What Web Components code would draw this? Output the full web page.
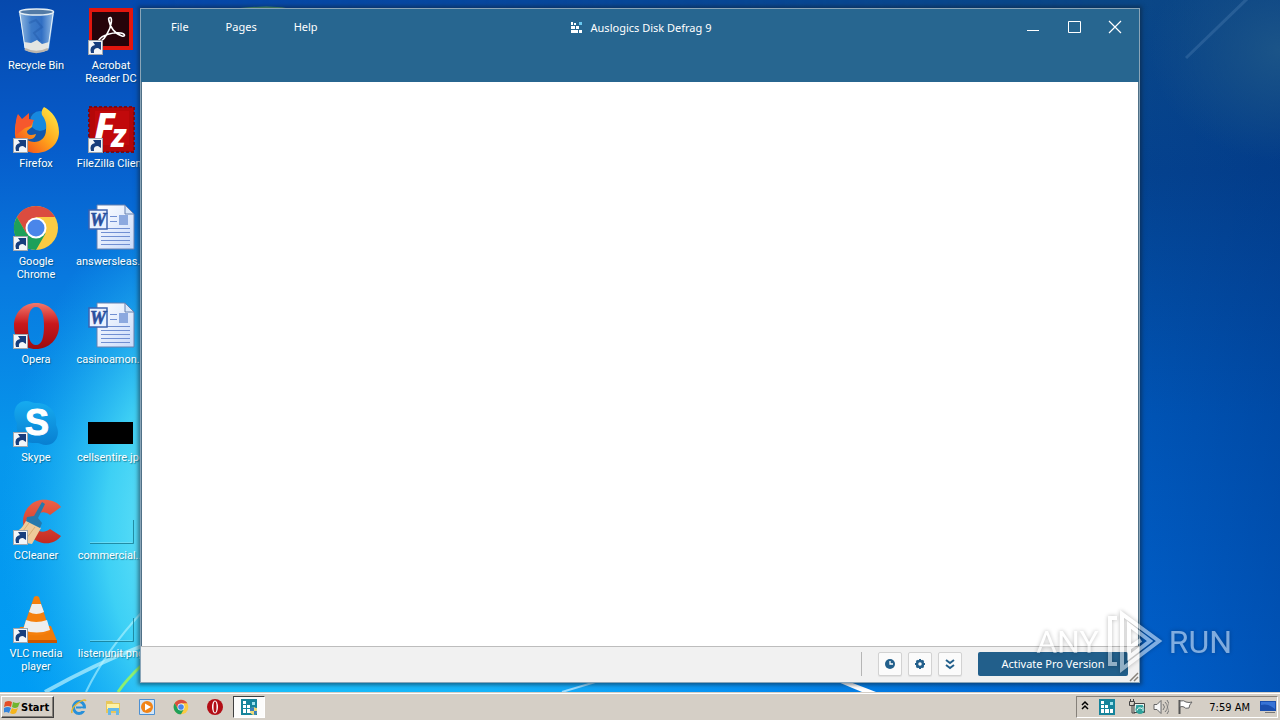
<!DOCTYPE html>
<html lang="en">
<head>
<meta charset="utf-8">
<title>Desktop</title>
<style>
  html, body {
    height: 100%;
    margin: 0;
  }
  body {
    overflow: hidden;
    font: 11px/13px "DejaVu Sans Condensed", "Noto Sans", sans-serif;
  }
</style>
</head>
<body>
<desk-top></desk-top>

<script>
// ================================================
// Constants
// ================================================
const WINDOW_FONT = '11px/16px "Noto Sans", "Open Sans", sans-serif';
const LABEL_FONT = '11px/13px Roboto, "Noto Sans", sans-serif';

const SHORTCUTS = [
  ['recycle', 'Recycle Bin', false],
  ['firefox', 'Firefox', true],
  ['chrome', 'Google Chrome', true],
  ['opera', 'Opera', true],
  ['skype', 'Skype', true],
  ['ccleaner', 'CCleaner', true],
  ['vlc', 'VLC media player', true],
  ['acrobat', 'Acrobat Reader DC', true],
  ['filezilla', 'FileZilla Client', true],
  ['word', 'answersleas...', false],
  ['word', 'casinoamon...', false],
  ['black', 'cellsentire.jpg', false],
  ['blank', 'commercial...', false],
  ['blank', 'listenunit.png', false],
];


// ================================================
// Icons
// ================================================
const CHROME = `
  <circle cx="24" cy="24" r="22" fill="#fbcb43"/>
  <path d="M24 13H43.100A22 22 0 0 0 4.900 13L14.500 29.500Z" fill="#db4c3f"/>
  <path d="M4.900 13A22 22 0 0 0 24 46L33.500 29.500 24 24 14.500 29.500Z" fill="#1ea05a"/>
  <circle cx="24" cy="24" r="10.500" fill="#fff"/>
  <circle cx="24" cy="24" r="8.500" fill="#4a86ea"/>`;

const OPERA = `
  <defs>
    <linearGradient id="op" x1="0" y1="0" x2="0" y2="1">
      <stop offset="0" stop-color="#f2786c"/><stop offset=".45" stop-color="#c9181c"/><stop offset="1" stop-color="#9c0b10"/>
    </linearGradient>
  </defs>
  <path fill="url(#op)" fill-rule="evenodd" d="M24 1C37 1 47 11 47 24S37 47 24 47 2 37 2 24 11 1 24 1ZM24 5C18 5 16 13 16 24S18 43 24 43 32 35 32 24 30 5 24 5Z"/>`;

const DEFRAG = `
  <rect width="16" height="16" fill="#16849b"/>
  <path fill="#fff" d="M2 2h3v3H2zM2 6h3v3H2zM6 6h3v3H6zM2 10h3v4H2zM6 10h4v4H6zM11 10h3v4h-3z"/>
  <path fill="#9fe3ee" d="M11 3h3v3h-3z"/>`;

const ICONS = {
  recycle: `<defs><linearGradient id="g"><stop offset="0" stop-color="#b9d7ee"/><stop offset=".35" stop-color="#4a86cd"/><stop offset=".65" stop-color="#3c78c8"/><stop offset="1" stop-color="#bcdcf4"/></linearGradient></defs>
    <path d="M7 4 13 41Q24 47 37 41L42 4Z" fill="url(#g)" opacity=".8"/>
    <path d="m12 34 1 8q11 5 23 0l1-8-7 2-5-4-6 3z" fill="#e4e5e2"/>
    <path d="m17 15 7-3 6 7-8 6 6 8" fill="none" stroke="#164b9d" stroke-width="2" opacity=".3"/>
    <path d="m8 6 5 34M41 6l-5 34" stroke="#e4f2fb"/>
    <ellipse cx="24.500" cy="4" rx="17" ry="3" fill="#537ba6" stroke="#e4eef4" stroke-width="1.500"/>
    <path d="M13 41q11 6 23 0" fill="none" stroke="#bbb5ad" stroke-width="2.500"/>`,
  firefox: `<defs><linearGradient id="g" x1="1" y1="0" x2="0" y2="1"><stop offset="0" stop-color="#fff44a"/><stop offset=".5" stop-color="#ffa21b"/><stop offset="1" stop-color="#f1381c"/></linearGradient></defs>
    <circle cx="25" cy="22" r="16" fill="#1257ac"/><circle cx="28" cy="15" r="10" fill="#1689df"/>
    <path fill="url(#g)" d="M32 1c8 4 15 13 15 25 0 12-10 21-23 21S2 38 3 25c0-7 2-12 4-15l3 4 6 0 5 1-1 6-5 4c0 4 3 5 9 3-1 5-6 6-10 5 7 6 20 3 20-9 1-7-1-11-4-15-1-3 0-6 2-8Z"/>
    <path fill="#f6582d" d="m6 8 4 5 7-6 0 6 5 1-3 6-6 2-9 7C3 18 4 12 6 8Z"/>`,
  chrome: CHROME,
  opera: OPERA,
  skype: `<defs><linearGradient id="g" x1="0" y1="0" x2="0" y2="1"><stop offset="0" stop-color="#16abf0"/><stop offset="1" stop-color="#087fd1"/></linearGradient></defs>
    <path fill="url(#g)" d="M14 1c4 0 7 2 9 2 14-1 23 10 21 22 5 9 0 20-10 20-4 0-6-2-9-2C11 44 3 35 5 23-1 12 4 1 14 1Z"/>
    <text x="25" y="35" text-anchor="middle" font-family="Liberation Sans, sans-serif" font-size="36" font-weight="700" fill="#fff" stroke="#fff">S</text>`,
  ccleaner: `<defs><linearGradient id="g" x1="0" y1="0" x2="0" y2="1"><stop offset="0" stop-color="#ec6247"/><stop offset="1" stop-color="#c32a21"/></linearGradient></defs>
    <path fill="url(#g)" d="M49 9 38 17c-7-6-16-1-16 7s8 13 16 7l11 7c-6 8-16 9-24 5C4 34 8 7 28 2c8-1 17 1 21 7Z"/>
    <path fill="#eecb9b" d="m15 21 14 9-9 16C12 45 4 41 1 34c8-1 10-6 14-13Z"/>
    <path d="m8 37 9-12M14 41l9-12" stroke="#d9ae74" stroke-width="1"/>
    <path fill="#2579ad" d="m15 19 7-1 8-14 3 2-7 14 4 5-2 5-14-7z"/>`,
  vlc: `<path fill="#f07b09" d="m8 31 31-1 6 15H4z"/><path fill="#c95500" d="m4 44 41 0v3H4z"/>
    <path fill="#f5800d" d="M22 1q2.500-2 5 0l11 35q-14 7-28 0z"/>
    <path fill="#eee" d="m20 8h9l3 8q-8 4-15 0zM14 24q10 4 21 0l3 10q-13 5-27 0z"/>`,
  acrobat: `<rect x="2" y="0" width="44" height="42" fill="#e2160e"/><rect x="5" y="4" width="37" height="34" fill="#26040a"/>
    <path d="M22 10c4-3 3 8-2 16-4 7-9 10-8 6 3-5 14-8 22-7 5 1 4 4 1 3-7-2-12-9-13-15 0-1-1-2 0-3Z" fill="none" stroke="#fff" stroke-width="1.600"/>`,
  filezilla: `<rect x="2" y="1" width="45" height="45" fill="#b40708" stroke="#7b0b16" stroke-width="2" stroke-dasharray="3 2"/>
    <path d="M8 39V5h34v34z" fill="#c1090b"/>
    <text x="7" y="34" fill="#fff" font-family="Noto Sans, sans-serif" font-style="italic" font-weight="800" font-size="38">F<tspan dx="-4" dy="7" font-size="32">z</tspan></text>`,
  word: `<defs><linearGradient id="g" x1="0" y1="0" x2="1" y2="1"><stop offset="0" stop-color="#fff"/><stop offset="1" stop-color="#c8dafa"/></linearGradient></defs>
    <path d="M10 1h28l9 9v35H10Z" fill="url(#g)" stroke="#6781b0"/><path d="M38 1v9h9z" fill="#d9e7fa" stroke="#6781b0"/>
    <path d="M23 12.500h7M23 17.500h7M14 28.500h29M14 32.500h29M14 36.500h29M14 40.500h29M14 24.500h29" stroke="#708fd2"/>
    <path fill="#8ca9df" d="M32 11h9v10h-9z"/><path fill="#e9f1ff" stroke="#3d63b0" stroke-width="1.500" d="M2 6h18v19H2z"/>
    <text x="11" y="22" text-anchor="middle" font-family="Liberation Serif, serif" font-size="18" font-weight="700" font-style="italic" fill="#294f9d" stroke="#294f9d" stroke-width=".6">W</text>`,
  black: `<path d="M1 22h45v22H1z"/>`,
  blank: `<path d="M46.500 22v23.500H3" fill="none" stroke="#187a91" opacity=".8"/><path d="M3 44.500h42" stroke="#8de7fa" opacity=".5"/>`,
};

const SMALL_ICONS = {
  ie: `<ellipse cx="8" cy="8.500" rx="5.500" ry="6" fill="none" stroke="#2790d9" stroke-width="3"/><path d="M5 8.500h9" stroke="#2790d9" stroke-width="2"/><path d="M10 12h6v-2.500h-6z" fill="#d5cfc6"/><path d="M1 14C-1 8 13-2 15 2" fill="none" stroke="#e7b82c" stroke-width="1.500"/>`,
  folder: `<path d="M1 2h6l1 2h7v10H1z" fill="#e8c75a"/><path d="M2 5h12v5H2z" fill="#fff3a6"/><path d="M3 16V9h11v7h-3v-4H6v4z" fill="#66b9e9"/>`,
  media: `<path d="M.5.5h15v15H.5z" fill="#d3e6f8" stroke="#4c90d2"/><circle cx="8" cy="8" r="6" fill="#f18417"/><path d="M6 4.500v7L12 8z" fill="#fff"/>`,
  chrome: `<g transform="scale(.333)">${CHROME}</g>`,
  opera: `<circle cx="8" cy="8" r="8" fill="#b30e16"/><ellipse cx="8" cy="8" rx="3" ry="6.500" fill="#fff"/><ellipse cx="8" cy="8" rx="1.500" ry="5.500" fill="#b30e16"/>`,
  defrag: DEFRAG,
  shield: `${DEFRAG}<path d="M9 9q3 0 4-1 1 1 3 1v3q0 3-3 4-4-1-4-4z" fill="#eddb78"/><path d="M9 9q3 0 4-1v4H9zM13 12h3q0 3-3 4z" fill="#397fbb"/>`,
  network: `<path d="M5 4.500h10.500v9H5z" fill="#e9f4ee" stroke="#444"/><path d="M7 6h7v6H7z" fill="#45a6bb"/><circle cx="11" cy="10.500" r="4.500" fill="#2fa29b"/><path d="M8 11.500q1-4 5-2M14 8v4" fill="none" stroke="#fff"/><path d="M.5 2.500h5v4h-5zM1.500 0v2M4.500 0v2M3 6v8h3" fill="none" stroke="#444"/>`,
  sound: `<path d="M1 5.500h3l4-4v13l-4-4H1z" fill="#f7f7f7" stroke="#666"/><path d="M10 5q3 3 0 6M12 3q5 5 0 10M14 1q5 7 0 14" fill="none" stroke="#777"/>`,
  flag: `<path d="M2.500 1v14" stroke="#555" stroke-width="2"/><path d="M3 2q4-1 6 1 3 1 6 0-3 3-3 6-4 1-5-1-2-1-4 0z" fill="#fff" stroke="#666"/>`,
  monitor: `<path d="M0 2h16v10H0z" fill="#1b4fae"/><path d="M1 3h14v7Q8 4 1 6z" fill="#3873d6"/><path d="M5 13h10v1H5z" fill="#777"/>`,
  windows: `<path d="M1 3q4-2 7 0L7 8Q4 6 0 8z" fill="#e44e27"/><path d="M9 3q4 2 7 0l-2 5q-3 2-6 0z" fill="#71b530"/><path d="M0 9q4-2 7 0l-2 5q-3-2-6 0z" fill="#3485dc"/><path d="M8 9q3 2 6 0l-2 5q-3 2-6 0z" fill="#f5b51c"/>`,
  chevrons: `<path d="m5 6 3-3 3 3M5 10l3-3 3 3" fill="none" stroke="#000" stroke-width="1.500"/>`,
  clock: `<circle cx="8" cy="8" r="5" fill="#225f8b"/><path d="M8 5v3h3" fill="none" stroke="#fff" stroke-width="1.300"/>`,
  gear: `<circle cx="8" cy="8" r="3" fill="none" stroke="#225f8b" stroke-width="2.500"/><path d="M8 3v2M8 11v2M3 8h2M11 8h2M4.500 4.500 6 6M10 10l1.500 1.500M11.500 4.500 10 6M6 10l-1.500 1.500" stroke="#225f8b" stroke-width="2"/>`,
  down: `<path d="m4 4 4 3 4-3M4 9l4 3 4-3" fill="none" stroke="#225f8b" stroke-width="2"/>`,
  minimize: `<path d="M2 11.500h12" stroke="#fff"/>`,
  maximize: `<path d="M2.500 2.500h12v11h-12z" fill="none" stroke="#fff"/>`,
  close: `<path d="m2 2 12 12M14 2 2 14" stroke="#fff" stroke-width="1.200"/>`,
  blocks: `<path fill="#fff" d="M2 2h2v3H2zM2 6h4v3H2zM7 6h3v3H7zM2 10h7v3H2zM10 10h3v3h-3zM5 3h2v2H5z"/><path fill="#69c7ee" d="M10 2h3v3h-3z"/>`,
};

const ARROW = `<rect x="1.500" y="32.500" width="14" height="14" fill="#f3f6f9" stroke="#a2a7ad"/>
  <path d="M4 45q-2-7 4-8l-2-3h8v8l-3-2q-5 0-4 5z" fill="#173e7d"/>`;


// ================================================
// Web Components
// ================================================
class SmallIcon extends HTMLElement {
  connectedCallback() {
    this.attachShadow({ mode: 'open' }).innerHTML = `
      <style>
        :host { display: block; width: 16px; height: 16px; flex: none; }
        svg { display: block; }
      </style>
      <svg width="16" height="16" viewBox="0 0 16 16" aria-hidden="true">${SMALL_ICONS[this.getAttribute('name')]}</svg>`;
  }
}
customElements.define('small-icon', SmallIcon);


class DesktopIcon extends HTMLElement {
  connectedCallback() {
    const arrow = this.hasAttribute('shortcut') ? ARROW : '';
    this.attachShadow({ mode: 'open' }).innerHTML = `
      <style>
        :host {
          display: flex;
          flex-direction: column;
          align-items: center;
          gap: 3px;
          color: #fff;
          font: ${LABEL_FONT};
          text-align: center;
        }
        svg { display: block; flex: none; overflow: visible; }
        span { text-shadow: 1px 1px 1px #0458; }
      </style>
      <svg width="48" height="48" viewBox="0 0 48 48" aria-hidden="true">${ICONS[this.getAttribute('icon')]}${arrow}</svg>
      <span><slot></slot></span>`;
  }
}
customElements.define('desktop-icon', DesktopIcon);


class DeskWallpaper extends HTMLElement {
  connectedCallback() {
    this.attachShadow({ mode: 'open' }).innerHTML = `
      <style>
        :host { display: block; }
        svg { display: block; width: 100%; height: 100%; }
      </style>
      <svg viewBox="0 0 1280 692" preserveAspectRatio="none" aria-hidden="true">
        <defs>
          <linearGradient id="left" x1="0" y1="0" x2="0" y2="1">
            <stop offset="0" stop-color="#0649ad"/><stop offset=".2" stop-color="#065bca"/>
            <stop offset=".4" stop-color="#0879df"/><stop offset=".65" stop-color="#0797ec"/>
            <stop offset="1" stop-color="#009cf4"/>
          </linearGradient>
          <linearGradient id="right" x1="0" y1="0" x2="0" y2="1">
            <stop offset="0" stop-color="#0a4787"/><stop offset=".25" stop-color="#04428f"/>
            <stop offset=".6" stop-color="#0054b5"/><stop offset="1" stop-color="#0060cc"/>
          </linearGradient>
          <linearGradient id="fade"><stop offset=".1" stop-color="#fff" stop-opacity="0"/><stop offset=".85" stop-color="#fff"/></linearGradient>
          <mask id="m"><rect width="1280" height="692" fill="url(#fade)"/></mask>
          <radialGradient id="glow"><stop offset="0" stop-color="#8cf4fa"/><stop offset=".5" stop-color="#48daf6" stop-opacity=".85"/><stop offset="1" stop-color="#12a9f4" stop-opacity="0"/></radialGradient>
          <linearGradient id="edge"><stop offset="0" stop-color="#002c78" stop-opacity="0"/><stop offset="1" stop-color="#002c78" stop-opacity=".25"/></linearGradient>
          <linearGradient id="floor"><stop offset="0" stop-color="#1bc4fa"/><stop offset=".35" stop-color="#16b4fa"/><stop offset=".6" stop-color="#0690f2"/><stop offset="1" stop-color="#0068d8" stop-opacity="0"/></linearGradient>
          <radialGradient id="corner"><stop offset="0" stop-color="#1b5488"/><stop offset="1" stop-color="#1b5488" stop-opacity="0"/></radialGradient>
        </defs>
        <rect width="1280" height="692" fill="url(#left)"/>
        <rect width="1280" height="692" fill="url(#right)" mask="url(#m)"/>
        <ellipse cx="210" cy="530" rx="210" ry="340" fill="url(#glow)"/>
        <rect x="140" y="675" width="1000" height="17" fill="url(#floor)"/>
        <rect x="1140" width="140" height="692" fill="url(#edge)"/>
        <ellipse cx="1280" cy="50" rx="130" ry="110" fill="url(#corner)"/>
        <path d="M1186 58 1248-2" stroke="#6b98c8" stroke-width="3" opacity=".25"/>
        <path d="M45 692Q95 664 142 646" fill="none" stroke="#c6f7ff" stroke-width="4" opacity=".65"/>
        <path d="M86 692Q105 652 142 612" fill="none" stroke="#b8f5ff" stroke-width="2" opacity=".6"/>
        <path d="M118 692Q126 680 142 665" fill="none" stroke="#8cef71" stroke-width="3"/>
        <path d="m562 692 40-12" stroke="#9bdcff" stroke-width="2"/>
        <path d="m838 682 12 0 26 10h-14z" fill="#fff"/>
        <path d="M240 8q30-3 46 0z" fill="#55a877"/>
      </svg>`;
  }
}
customElements.define('desk-wallpaper', DeskWallpaper);


class AppWindow extends HTMLElement {
  connectedCallback() {
    this.attachShadow({ mode: 'open' }).innerHTML = `
      <style>
        :host {
          display: flex;
          flex-direction: column;
          box-sizing: border-box;
          border: 1px solid #8aa5b8;
          background: #fff;
          box-shadow: 0 0 4px 2px #1238;
          font: ${WINDOW_FONT};
        }
        button {
          padding: 0;
          border: 0;
          background: none;
          color: inherit;
          font: inherit;
        }
        header {
          display: grid;
          grid-template-columns: 1fr auto 1fr;
          align-items: start;
          height: 73px;
          background: #276690;
          color: #fff;
        }
        nav { display: flex; gap: 1px; padding-left: 12px; }
        nav button { height: 36px; padding: 0 18px; }
        h1 {
          display: flex;
          align-items: center;
          gap: 6px;
          height: 38px;
          margin: 0;
          font: inherit;
        }
        .controls { display: flex; justify-content: flex-end; padding-right: 4px; }
        .controls button { display: grid; place-items: center; width: 41px; height: 36px; }
        main { flex: 1; border: solid #4f7087; border-width: 0 1px; }
        footer {
          display: flex;
          align-items: flex-start;
          gap: 6px;
          box-sizing: border-box;
          height: 36px;
          padding: 5px 11px 0 0;
          border-top: 1px solid #bdbdbd;
          background: #f1f1f1;
          position: relative;
        }
        .rule { width: 1px; height: 24px; margin: 0 10px 0 auto; background: #b5b5b5; }
        .tool {
          display: grid;
          place-items: center;
          box-sizing: border-box;
          width: 24px;
          height: 24px;
          border: 1px solid #d2d2d2;
          border-radius: 2px;
          background: #fbfbfb;
          box-shadow: 0 1px 1px #0001;
        }
        .activate {
          width: 150px;
          height: 24px;
          margin-left: 10px;
          border-radius: 2px;
          background: #225f8b;
          color: #fff;
        }
        .grip { position: absolute; right: 0; bottom: 0; }
      </style>
      <header>
        <nav><button>File</button><button>Pages</button><button>Help</button></nav>
        <h1><small-icon name="blocks"></small-icon><slot></slot></h1>
        <div class="controls">
          <button aria-label="Minimize"><small-icon name="minimize"></small-icon></button>
          <button aria-label="Maximize"><small-icon name="maximize"></small-icon></button>
          <button aria-label="Close"><small-icon name="close"></small-icon></button>
        </div>
      </header>
      <main></main>
      <footer>
        <span class="rule"></span>
        <button class="tool" aria-label="Schedule"><small-icon name="clock"></small-icon></button>
        <button class="tool" aria-label="Settings"><small-icon name="gear"></small-icon></button>
        <button class="tool" aria-label="More"><small-icon name="down"></small-icon></button>
        <button class="activate">Activate Pro Version</button>
        <svg class="grip" width="10" height="10" aria-hidden="true"><path d="m1 9 8-8M5 9l4-4" stroke="#87827a" stroke-width="1.500"/></svg>
      </footer>`;
  }
}
customElements.define('app-window', AppWindow);


class WaterMark extends HTMLElement {
  connectedCallback() {
    this.attachShadow({ mode: 'open' }).innerHTML = `
      <style>
        :host {
          display: flex;
          align-items: center;
          gap: 6px;
          color: #fff;
          font: 32px/64px Roboto, sans-serif;
          opacity: .5;
          filter: drop-shadow(0 0 2px #0008);
          pointer-events: none;
        }
        svg { display: block; }
      </style>
      <span>ANY</span>
      <svg width="58" height="64" viewBox="0 0 58 64" fill="none" stroke="#fff" stroke-width="4" aria-hidden="true">
        <path d="M12 8H5v46h7M17 54V4l37 27-37 28V52M24 15v32l21-16z"/>
        <path d="M24 38l12-8"/>
      </svg>
      <span>RUN</span>`;
  }
}
customElements.define('water-mark', WaterMark);


class TaskBar extends HTMLElement {
  connectedCallback() {
    const launchers = [['ie', 'Internet Explorer'], ['folder', 'Explorer'], ['media', 'Media Player'], ['chrome', 'Chrome'], ['opera', 'Opera'], ['shield', 'Disk Defrag']]
      .map(([name, label]) => `<button class="task" aria-label="${label}"><small-icon name="${name}"></small-icon></button>`)
      .join('');

    this.attachShadow({ mode: 'open' }).innerHTML = `
      <style>
        :host {
          display: flex;
          align-items: center;
          box-sizing: border-box;
          height: 28px;
          padding: 1px 2px 0 1px;
          border-top: 1px solid #d5cfc6;
          background: #d5cfc6;
          box-shadow: inset 0 1px #fff;
          color: #000;
        }
        button { border: 0; padding: 0; background: none; font: inherit; }
        .start {
          display: flex;
          align-items: center;
          gap: 1px;
          box-sizing: border-box;
          width: 53px;
          height: 22px;
          padding-left: 2px;
          border: 1px solid;
          border-color: #fff #404040 #404040 #fff;
          box-shadow: inset -1px -1px #858079;
          font-weight: 700;
        }
        .tasks { display: flex; gap: 2px; margin-left: 9px; }
        .task {
          display: grid;
          place-items: center;
          box-sizing: border-box;
          width: 32px;
          height: 22px;
        }
        .task:last-child {
          border: 1px solid;
          border-color: #404040 #fff #fff #404040;
          background: #fcfcfb;
        }
        .tray {
          display: flex;
          align-items: center;
          gap: 8px;
          box-sizing: border-box;
          height: 22px;
          margin-left: auto;
          padding-right: 1px;
          border: 1px solid;
          border-color: #858079 #fff #fff #858079;
        }
        .tray small-icon:nth-child(2) { margin-right: 6px; margin-left: -2px; }
        time { margin: 0 2px 0 8px; }
      </style>
      <button class="start"><small-icon name="windows"></small-icon>Start</button>
      <div class="tasks">${launchers}</div>
      <div class="tray">
        <small-icon name="chevrons"></small-icon>
        <small-icon name="defrag"></small-icon>
        <small-icon name="network"></small-icon>
        <small-icon name="sound"></small-icon>
        <small-icon name="flag"></small-icon>
        <time>7:59 AM</time>
        <small-icon name="monitor"></small-icon>
      </div>`;
  }
}
customElements.define('task-bar', TaskBar);


class DeskTop extends HTMLElement {
  connectedCallback() {
    const icons = SHORTCUTS
      .map(([icon, label, shortcut]) => `<desktop-icon icon="${icon}" ${shortcut ? 'shortcut' : ''}>${label}</desktop-icon>`)
      .join('');

    this.attachShadow({ mode: 'open' }).innerHTML = `
      <style>
        :host { display: flex; flex-direction: column; height: 100vh; }
        .area { position: relative; flex: 1; min-height: 0; overflow: hidden; }
        desk-wallpaper { position: absolute; inset: 0; }
        .icons {
          position: relative;
          display: grid;
          grid-auto-flow: column;
          grid-template-rows: repeat(7, 98px);
          grid-auto-columns: 72px;
          column-gap: 3px;
          padding-top: 8px;
        }
        app-window { position: absolute; inset: 8px 140px 9px; }
        water-mark { position: absolute; right: 48px; bottom: 18px; }
      </style>
      <div class="area">
        <desk-wallpaper></desk-wallpaper>
        <div class="icons">${icons}</div>
        <app-window>Auslogics Disk Defrag 9</app-window>
        <water-mark></water-mark>
      </div>
      <task-bar></task-bar>`;
  }
}
customElements.define('desk-top', DeskTop);
</script>
</body>
</html>
